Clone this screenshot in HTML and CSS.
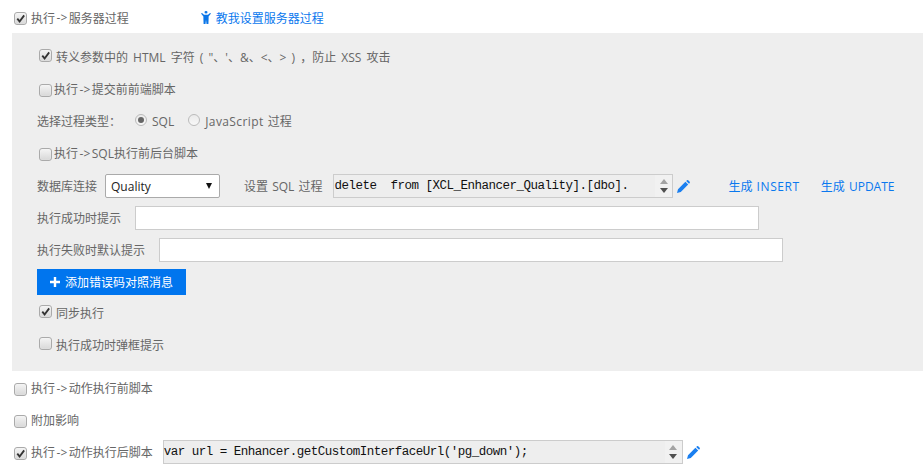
FILE: index.html
```html
<!DOCTYPE html>
<html lang="en">
<head>
    <meta charset="UTF-8">
    <meta name="viewport" content="width=device-width, initial-scale=1.0">
    <title>服务器过程</title>
    <link rel="stylesheet" href="styles.css">
</head>
<body>
    <!-- Top row -->
    <div class="row top-row">
        <label class="check"><span class="box on"><svg viewBox="0 0 12 12"><path d="M2.5 6.2 5 9.2 10 2.6" /></svg></span>执行<span class="arrow">-&gt;</span>服务器过程</label>
        <a href="#" class="link help-link">
            <svg class="man" viewBox="0 0 10 13"><path d="M3.5 1.2a1.5 1.2 0 0 1 3 0a1.5 1.2 0 0 1-3 0ZM0 2.4 1 2l2 1.8h4L9 2l1 .4-2.4 3V8L7.4 13H5.5L5 8.8 4.500 13H2.600L2.400 8V5.400Z" /></svg>
            教我设置服务器过程
        </a>
    </div>

    <!-- Server process panel -->
    <div class="panel">
        <div class="row xss-row">
            <label class="check raised"><span class="box on"><svg viewBox="0 0 12 12"><path d="M2.5 6.2 5 9.2 10 2.6" /></svg></span>转义参数中的 HTML 字符 ( "、'、&amp;、&lt;、&gt; ) ，防止 XSS 攻击</label>
        </div>
        <div class="row">
            <label class="check"><span class="box"></span>执行<span class="arrow">-&gt;</span>提交前前端脚本</label>
        </div>
        <div class="row">
            <span class="field-label type-label">选择过程类型：</span>
            <label class="radio"><span class="dot on"></span>SQL</label>
            <label class="radio"><span class="dot"></span><span><span class="wide-js">JavaScript</span> 过程</span></label>
        </div>
        <div class="row">
            <label class="check"><span class="box"></span>执行<span class="arrow">-&gt;</span>SQL执行前后台脚本</label>
        </div>
        <div class="row db-row">
            <span class="field-label db-label">数据库连接</span>
            <div class="select">Quality<span class="caret"></span></div>
            <span class="field-label sql-label">设置 SQL 过程</span>
            <div class="code code-sql">
                <span class="code-text">delete  from [XCL_Enhancer_Quality].[dbo].</span>
                <span class="spin"><i class="up"></i><i class="down"></i></span>
            </div>
            <svg class="pencil" viewBox="0 0 13 13"><path d="M0 13 1 9.200 8.400 1.800 11.200 4.600 3.800 12ZM9.200 1 10 .3q.6-.4 1.200 0l1.500 1.500q.4.600 0 1.200L12 3.800Z" /></svg>
            <a href="#" class="link gen-insert">生成 <span class="wide">INSERT</span></a>
            <a href="#" class="link gen-update">生成 UPDATE</a>
        </div>
        <div class="row">
            <span class="field-label">执行成功时提示</span>
            <input type="text" class="text-input">
        </div>
        <div class="row">
            <span class="field-label">执行失败时默认提示</span>
            <input type="text" class="text-input">
        </div>
        <div class="row add-row">
            <button class="btn-add"><svg viewBox="0 0 10 10"><path d="M3.800 0h2.400v3.800H10v2.400H6.200V10H3.800V6.200H0V3.800h3.800Z" /></svg>添加错误码对照消息</button>
        </div>
        <div class="row">
            <label class="check raised"><span class="box on"><svg viewBox="0 0 12 12"><path d="M2.5 6.2 5 9.2 10 2.6" /></svg></span>同步执行</label>
        </div>
        <div class="row">
            <label class="check raised"><span class="box"></span>执行成功时弹框提示</label>
        </div>
    </div>

    <!-- Action scripts -->
    <div class="actions">
        <div class="row">
            <label class="check"><span class="box"></span>执行<span class="arrow">-&gt;</span>动作执行前脚本</label>
        </div>
        <div class="row">
            <label class="check"><span class="box"></span>附加影响</label>
        </div>
        <div class="row">
            <label class="check"><span class="box on"><svg viewBox="0 0 12 12"><path d="M2.5 6.2 5 9.2 10 2.6" /></svg></span>执行<span class="arrow">-&gt;</span>动作执行后脚本</label>
            <div class="code code-js">
                <span class="code-text">var url = Enhancer.getCustomInterfaceUrl('pg_down');</span>
                <span class="spin"><i class="up"></i><i class="down"></i></span>
            </div>
            <svg class="pencil" viewBox="0 0 13 13"><path d="M0 13 1 9.200 8.400 1.800 11.200 4.600 3.800 12ZM9.200 1 10 .3q.6-.4 1.200 0l1.500 1.500q.4.600 0 1.200L12 3.800Z" /></svg>
        </div>
    </div>
</body>
</html>
```

FILE: styles.css
```css
body {
    font-family: "Open Sans", "Noto Sans CJK SC", sans-serif;
    font-size: 12px;
    word-spacing: 1px;
    color: #666;
    margin: 0;
    padding: 0;
    background-color: #fff;
}
.row {
    display: flex;
    align-items: center;
    height: 32px;
}
a {
    text-decoration: none;
}
.link {
    color: #0a78ee;
}
.arrow {
    margin: 0 1.500px;
}
.wide {
    letter-spacing: 0.600px;
}
.wide-js {
    letter-spacing: 0.400px;
}
.xss-row {
    word-spacing: 2px;
}
.top-row {
    height: 33px;
    padding: 2px 0 0 14px;
    box-sizing: border-box;
}
.help-link {
    display: flex;
    align-items: center;
    margin-left: 72px;
}
.man {
    width: 10px;
    height: 13px;
    margin-right: 5px;
    fill: #0b76e8;
}
.panel {
    margin-left: 12px;
    padding: 8px 0 10px 25px;
    background-color: #eee;
}
.check {
    display: flex;
    align-items: center;
}
.box {
    width: 11px;
    height: 11px;
    margin: 2px 4px 0 0;
    border: 1px solid #aaa;
    border-radius: 3px;
    background: linear-gradient(#f4f4f4, #d8d8d8);
    box-shadow: inset 0 0 1px #fff;
}
.box svg {
    display: block;
    width: 11px;
    height: 11px;
    fill: none;
    stroke: #333;
    stroke-width: 2;
}
.panel .check {
    margin-left: 2px;
}
.panel .box {
    margin-right: 2px;
}
.panel .raised .box {
    margin-top: -4px;
    margin-right: 4px;
}
.radio {
    display: flex;
    align-items: center;
    margin-right: 14px;
}
.dot {
    position: relative;
    width: 10px;
    height: 10px;
    margin: -3px 5px 0 0;
    border: 1px solid #bbb;
    border-radius: 50%;
    background: linear-gradient(#eaeaea, #f8f8f8);
}
.dot.on::after {
    content: "";
    position: absolute;
    left: 2px;
    top: 2px;
    width: 6px;
    height: 6px;
    border-radius: 50%;
    background-color: #666;
}
.field-label {
    margin-right: 14px;
    white-space: nowrap;
}
.db-row {
    margin-top: 1px;
}
.add-row {
    margin-bottom: -1px;
}
.db-label {
    margin-right: 8px;
}
.select {
    display: flex;
    align-items: center;
    justify-content: space-between;
    box-sizing: border-box;
    width: 115px;
    height: 24px;
    padding: 0 7px 0 5px;
    border: 1px solid #aaa;
    border-radius: 2px;
    background-color: #fff;
    color: #222;
}
.caret {
    width: 0;
    height: 0;
    border-left: 3.500px solid transparent;
    border-right: 3.500px solid transparent;
    border-top: 6px solid #111;
}
.sql-label {
    margin-left: 24px;
    margin-right: 11px;
}
.code {
    display: flex;
    align-items: center;
    justify-content: space-between;
    box-sizing: border-box;
    height: 24px;
    border: 1px solid #ccc;
    background-color: #eee;
    color: #111;
    font-family: "Liberation Mono", monospace;
    font-size: 12.500px;
    letter-spacing: -0.500px;
    word-spacing: 0;
    white-space: pre;
}
.code-sql {
    width: 340px;
}
.code-js {
    width: 520px;
    margin-left: 10px;
}
.spin {
    display: flex;
    flex-direction: column;
    align-items: center;
    justify-content: center;
    gap: 4px;
    width: 17px;
    height: 22px;
    background-color: #f1f1f1;
}
.spin i {
    width: 0;
    height: 0;
    border-left: 4px solid transparent;
    border-right: 4px solid transparent;
}
.spin .up {
    border-bottom: 5px solid #a3a3a3;
}
.spin .down {
    border-top: 5px solid #505050;
}
.pencil {
    width: 13px;
    height: 13px;
    margin-left: 4px;
    fill: #1a7ff0;
}
.gen-insert {
    margin-left: 38px;
}
.gen-update {
    margin-left: 21px;
}
.text-input {
    box-sizing: border-box;
    width: 624px;
    height: 24px;
    margin: 0;
    border: 1px solid #ccc;
    background-color: #fff;
}
.btn-add {
    display: flex;
    align-items: center;
    justify-content: center;
    width: 149px;
    height: 26px;
    padding: 0;
    border: none;
    background-color: #0075ee;
    color: #fff;
    font-family: inherit;
    font-size: 12px;
}
.btn-add svg {
    width: 10px;
    height: 10px;
    margin-right: 5px;
    fill: #fff;
}
.actions {
    margin-top: 1px;
}
.actions .row {
    padding-left: 14px;
}
```
